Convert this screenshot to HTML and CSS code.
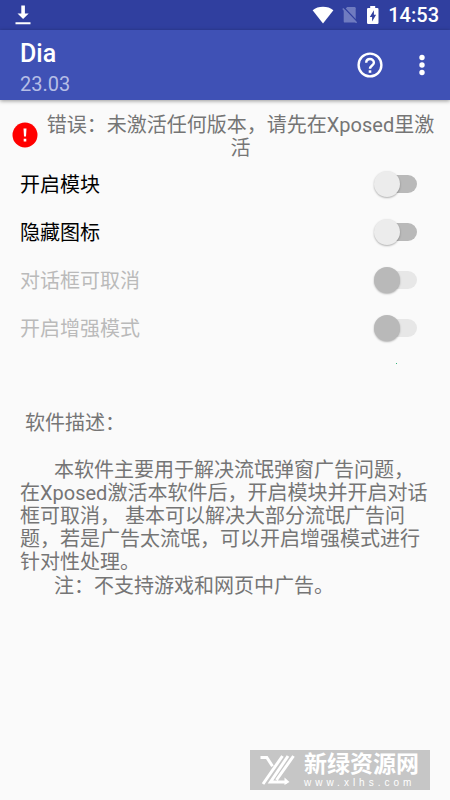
FILE: index.html
```html
<!DOCTYPE html>
<html lang="zh-CN">
<head>
<meta charset="utf-8">
<meta name="viewport" content="width=device-width, initial-scale=1">
<title>Dia</title>
<link rel="stylesheet" href="styles.css">
</head>
<body>
<div class="status-bar">
  <svg class="download" viewBox="0 0 16 20" width="16" height="20" aria-hidden="true"><path d="M6.300 0.500h3.600v8h3.800L8.100 14 2.500 8.500h3.800zM.5 17.300h15v2h-15z"/></svg>
  <div class="status-icons">
    <svg viewBox="0 0 22 18" width="22" height="18" aria-hidden="true"><path d="M.6 4.200C3.500 1.900 7 .8 11 .8s7.500 1.100 10.400 3.400L11 17.600z"/></svg>
    <svg class="no-sim" viewBox="0 0 16 18" width="16" height="18" aria-hidden="true"><path d="M5.200 1h7.300q1.200 0 1.200 1.200v14.400H2.900q-1.200 0-1.200-1.200V4.500z"/><path class="slash-gap" d="M1.800 1.500l13 13.700"/><path class="slash" d="M.8 2.500l13.800 14.300"/></svg>
    <svg viewBox="0 0 14 20" width="14" height="20" aria-hidden="true"><path fill-rule="evenodd" d="M4.200 1h5v2h2.100q1.200 0 1.200 1.200v13.600q0 1.200-1.200 1.200H2.200Q1 19 1 17.800V4.200Q1 3 2.200 3h2zM7.900 5.300L3.800 12h2.300v4.600l4-6.900H7.900z"/></svg>
    <time class="clock">14:53</time>
  </div>
</div>
<header class="app-bar">
  <div class="heading">
    <h1>Dia</h1>
    <p>23.03</p>
  </div>
  <button class="icon-button" type="button" aria-label="帮助">
    <svg viewBox="0 0 26 26" width="26" height="26" aria-hidden="true"><circle class="line" cx="13" cy="13" r="11.400"/><path class="line" d="M9.200 10.700C9.200 8.400 10.800 7 13 7s3.900 1.500 3.900 3.700c0 2.700-3.900 3-3.900 6.100"/><path d="M11.700 18.300h2.600v2.500h-2.600z"/></svg>
  </button>
  <button class="icon-button menu" type="button" aria-label="更多选项">
    <svg viewBox="0 0 6 22" width="6" height="22" aria-hidden="true"><circle cx="3" cy="3.500" r="2.700"/><circle cx="3" cy="11" r="2.700"/><circle cx="3" cy="18.500" r="2.700"/></svg>
  </button>
</header>
<main>
  <div class="notice" role="alert">
    <svg viewBox="0 0 26 26" width="26" height="26" aria-hidden="true"><circle class="alert-disc" cx="13" cy="13" r="12.500"/><path class="alert-mark" d="M11.500 6.500h3l-.5 8h-2zM11.700 16.800h2.600v2.600h-2.600z"/></svg>
    <p>错误：未激活任何版本，请先在Xposed里激活</p>
  </div>
  <form class="settings">
    <label class="row"><span>开启模块</span><input class="switch" type="checkbox" role="switch"></label>
    <label class="row"><span>隐藏图标</span><input class="switch" type="checkbox" role="switch"></label>
    <label class="row disabled"><span>对话框可取消</span><input class="switch" type="checkbox" role="switch" disabled></label>
    <label class="row disabled"><span>开启增强模式</span><input class="switch" type="checkbox" role="switch" disabled></label>
  </form>
  <div class="marker"></div>
  <section class="description">
    <h2>软件描述：</h2>
    <p>本软件主要用于解决流氓弹窗广告问题，在Xposed激活本软件后，开启模块并开启对话框可取消， 基本可以解决大部分流氓广告问题，若是广告太流氓，可以开启增强模式进行针对性处理。</p>
    <p>注：不支持游戏和网页中广告。</p>
  </section>
</main>
<footer class="watermark">
  <svg viewBox="0 0 36 30" width="36" height="30" aria-hidden="true"><path class="logo-line" d="M.5 2.500h6.300l5.700 8.700M22.500 1L3 29M28 1L10.500 27H27M33.500 1L16.500 25"/><path d="M24.500 22.500l5 4.500-5 3z"/></svg>
  <div class="watermark-text">
    <strong>新绿资源网</strong>
    <span>www.xlhs.com</span>
  </div>
</footer>
</body>
</html>
```
FILE: styles.css
```css
* {
  box-sizing: border-box;
}

body {
  margin: 0;
  min-height: 100vh;
  display: flex;
  flex-direction: column;
  background: #fafafa;
  color: #757575;
  font: 20px/24px Roboto, "Noto Sans CJK SC", sans-serif;
}

h1, h2, p {
  margin: 0;
  font-size: inherit;
  font-weight: 400;
}

svg {
  flex: none;
  fill: currentColor;
}

.status-bar {
  display: flex;
  align-items: center;
  justify-content: space-between;
  height: 30px;
  padding: 0 11px 0 15px;
  background: #303f9f;
  color: #fff;
}

.status-icons {
  display: flex;
  align-items: center;
  gap: 8px;
}

.no-sim {
  color: #6f7bc0;
}

.slash,
.slash-gap {
  stroke: currentColor;
  stroke-width: 1.5;
}

.slash-gap {
  stroke: #303f9f;
}

.clock {
  font-weight: 500;
}

.app-bar {
  display: flex;
  align-items: center;
  height: 70px;
  padding: 0 20px;
  background: #3f51b5;
  color: #fff;
  box-shadow: 0 1px 4px rgba(0, 0, 0, .4);
}

.heading {
  flex: 1;
  padding-top: 6px;
}

.heading h1 {
  font-size: 25px;
  font-weight: 500;
  line-height: 32px;
}

.heading p {
  color: #b6bee6;
  line-height: 28px;
}

.icon-button {
  display: flex;
  padding: 0;
  border: 0;
  background: none;
  color: inherit;
}

.menu {
  padding-left: 36px;
  padding-right: 5px;
}

.line {
  fill: none;
  stroke: currentColor;
  stroke-width: 2.4;
}

main {
  flex: 1;
}

.notice {
  display: flex;
  align-items: center;
  gap: 4px;
  min-height: 60px;
  padding: 10px 11px 0 12px;
}

.notice p {
  flex: 1;
  padding-top: 4px;
  line-height: 23px;
  text-align: center;
}

.alert-disc {
  fill: #f00;
}

.alert-mark {
  fill: #fff;
}

.row {
  display: flex;
  align-items: center;
  justify-content: space-between;
  height: 48px;
  padding: 0 33px 0 20px;
  color: #000;
}

.row span {
  padding-top: 2px;
}

.disabled {
  color: #bababa;
}

.switch {
  appearance: none;
  display: flex;
  align-items: center;
  width: 40px;
  height: 18px;
  margin: 0;
  border-radius: 9px;
  background: #b9b9b9;
}

.switch::before {
  content: "";
  width: 26px;
  height: 26px;
  margin-left: -3px;
  border-radius: 50%;
  background: #ececec;
  box-shadow: 0 1px 2px rgba(0, 0, 0, .3);
}

.switch:disabled {
  background: #e7e7e7;
}

.switch:disabled::before {
  background: #b9b9b9;
}

.marker {
  width: 1px;
  height: 1px;
  margin: 11px 53px 0 auto;
  background: #35b57c;
}

.description {
  padding: 47px 20px 0;
}

.description h2 {
  margin-bottom: 24px;
  padding-left: 5px;
}

.description p {
  margin-bottom: 1px;
  text-indent: 34px;
  line-height: 23px;
}

.watermark {
  display: flex;
  align-items: center;
  align-self: flex-end;
  gap: 8px;
  height: 40px;
  margin: 0 20px 10px;
  padding: 0 11px 0 10px;
  background: #c6c6c6;
  color: #fff;
}

.logo-line {
  fill: none;
  stroke: currentColor;
  stroke-width: 3;
}

.watermark-text {
  display: flex;
  flex-direction: column;
  padding-top: 2px;
}

.watermark strong {
  font-size: 23px;
  font-weight: 700;
  line-height: 24px;
}

.watermark span {
  font: 10px/12px "Liberation Sans", sans-serif;
  letter-spacing: 4px;
}
```
